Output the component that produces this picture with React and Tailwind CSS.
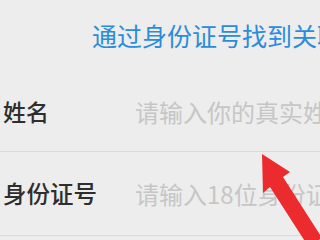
export default function App() {
  const font = { fontFamily: '"Noto Sans CJK SC", "Noto Sans", sans-serif' };
  return (
    <div className="relative w-[320px] h-[240px] overflow-hidden bg-[#ededed]" style={font}>
      <div className="h-[72px] pl-[92px] pt-[20px] whitespace-nowrap overflow-hidden text-[25px] leading-[30px] text-[#2a8cdc]">
        通过身份证号找到关联账号
      </div>
      <div className="h-[80px] flex items-center border-b border-[#dadada] whitespace-nowrap overflow-hidden">
        <div className="w-[135px] shrink-0 pl-[3px] text-[23px] font-medium text-[#2e2e2e]">姓名</div>
        <div className="shrink-0 text-[24px] text-[#c6c6c6]">请输入你的真实姓名</div>
      </div>
      <div className="h-[84px] flex items-center border-b border-[#dadada] whitespace-nowrap overflow-hidden">
        <div className="w-[135px] shrink-0 pl-[3px] text-[23.5px] font-medium text-[#2e2e2e]">身份证号</div>
        <div className="shrink-0 text-[24px] text-[#c6c6c6]">请输入18位身份证号</div>
      </div>
      <svg className="absolute left-0 top-0" width="320" height="240" viewBox="0 0 320 240">
        <polygon
          points="262,154 263,193 270,187 308,246 322,238 283,177 290,172"
          fill="#ec2b2e"
        />
      </svg>
    </div>
  );
}
